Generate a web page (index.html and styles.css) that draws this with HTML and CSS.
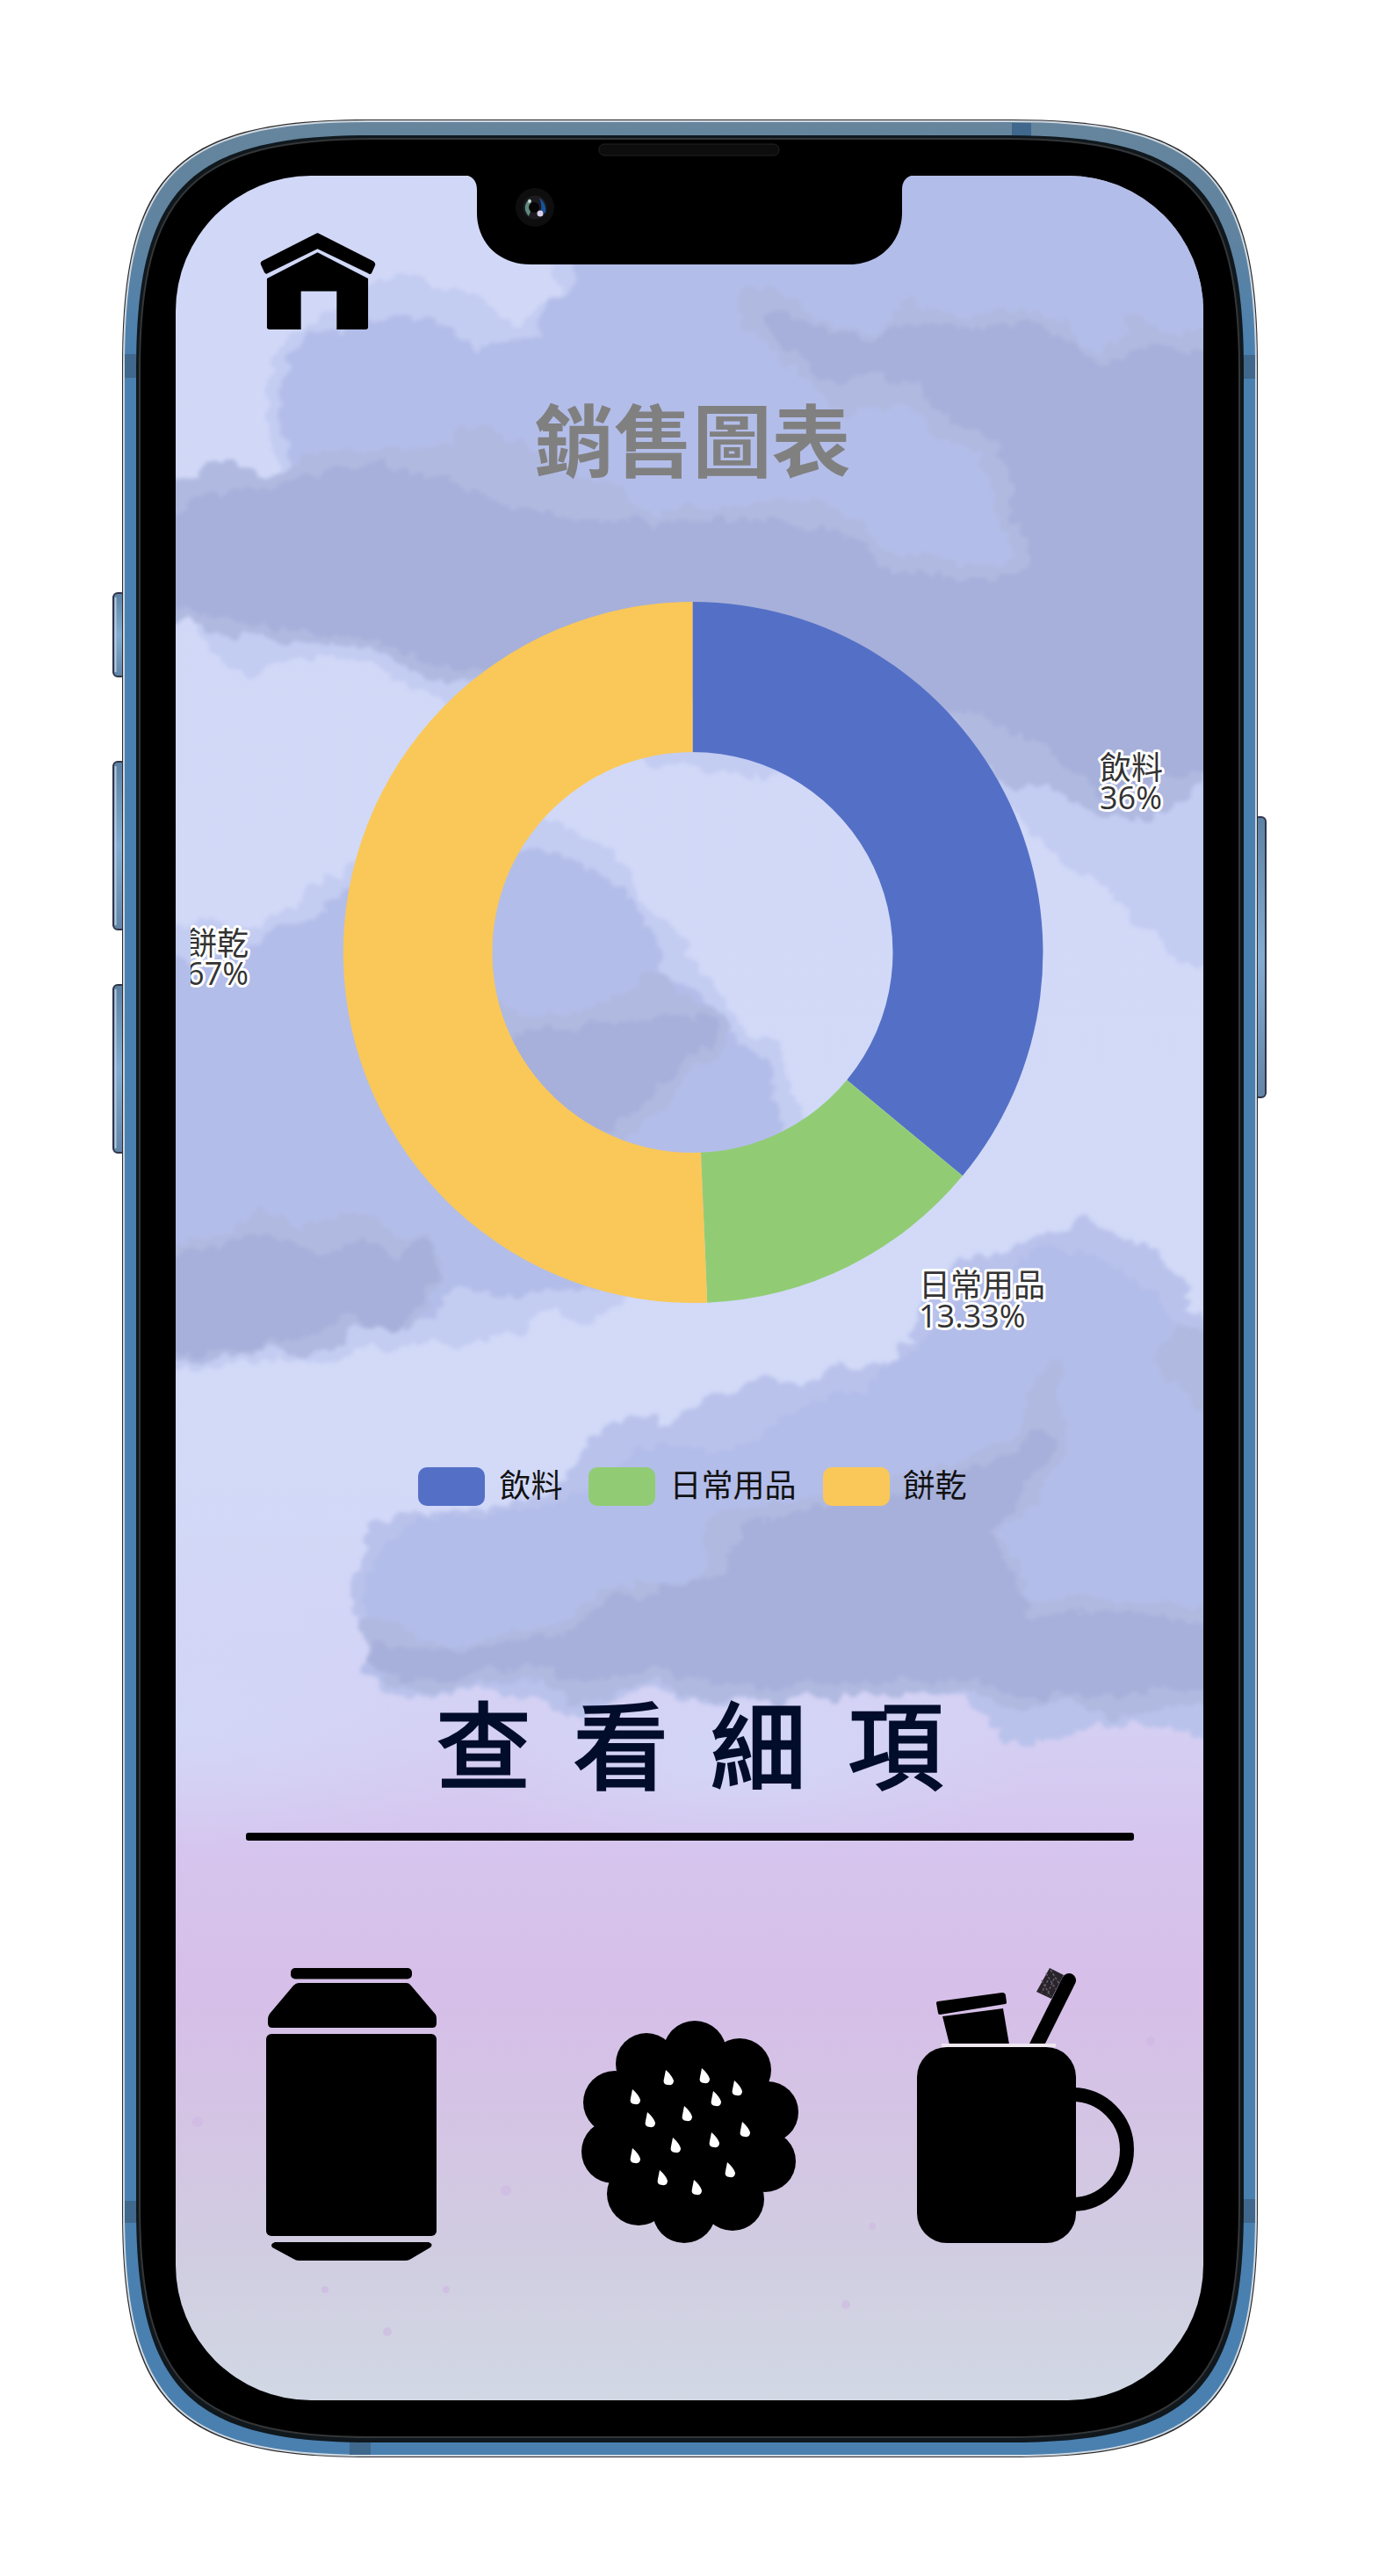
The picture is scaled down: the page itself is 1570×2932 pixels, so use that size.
FILE: index.html
```html
<!DOCTYPE html>
<html lang="zh-Hant">
<head>
<meta charset="utf-8">
<meta name="viewport" content="width=device-width, initial-scale=1">
<title>銷售圖表</title>
<link rel="stylesheet" href="styles.css">
</head>
<body>
<div class="stage">
<div class="phone">
  <svg class="frame" viewBox="139 136 1293 2661" preserveAspectRatio="none" aria-hidden="true">
    <defs>
      <linearGradient id="metal" x1="0" y1="0" x2="0" y2="1">
        <stop offset="0" stop-color="#66859d"/><stop offset=".05" stop-color="#5f83a0"/><stop offset=".1" stop-color="#4a80b0"/><stop offset="1" stop-color="#4a80b0"/>
      </linearGradient>
      <linearGradient id="key" x1="0" y1="0" x2="0" y2="1">
        <stop offset="0" stop-color="#5d81a2"/><stop offset=".5" stop-color="#84acd0"/><stop offset="1" stop-color="#6384a6"/>
      </linearGradient>
    </defs>
    <g fill="url(#key)" stroke="#303549" stroke-width="2">
      <rect x="129" y="675" width="14" height="95" rx="5"/>
      <rect x="129" y="867" width="14" height="191" rx="5"/>
      <rect x="129" y="1121" width="14" height="191" rx="5"/>
      <rect x="1428" y="930" width="13" height="319" rx="5"/>
    </g>
    <g fill="none" stroke="#b3cbe2" stroke-width="2">
      <path d="M131.500 680V765M131.500 872V1053M131.500 1126V1307"/>
    </g>
    <path d="M139 416C139 197 200 136 419 136H1152C1371 136 1432 197 1432 416V2517C1432 2736 1371 2797 1152 2797H419C200 2797 139 2736 139 2517Z" fill="#2b2b2e"/>
    <path d="M141 416C141 199 202 138 419 138H1152C1369 138 1430 199 1430 416V2517C1430 2734 1369 2795 1152 2795H419C202 2795 141 2734 141 2517Z" fill="url(#metal)" stroke="#cfd8e0" stroke-width="2"/>
    <path d="M142 403h13v27h-13zM1416 404h13v27h-13zM142 2505h13v25h-13zM1416 2503h13v27h-13zM1152 140h22v15h-22zM398 2779h24v15h-24z" fill="#3f688c"/>
    <path d="M155 420C155 213 216 154 423 154H1148C1355 154 1416 213 1416 420V2513C1416 2720 1355 2780 1148 2780H423C216 2780 155 2720 155 2513Z" fill="#10181d"/>
    <path d="M159 422C159 218 220 158 425 158H1146C1351 158 1411 218 1411 422V2510C1411 2714 1351 2774 1146 2774H425C220 2774 159 2714 159 2510Z" fill="#000" stroke="#343638" stroke-width="2"/>
    <rect x="682" y="164" width="205" height="13" rx="6" fill="#0d0d0e" stroke="#222324"/>
  </svg>

  <main class="screen">
    <svg class="sky" viewBox="200 200 1170 2532" preserveAspectRatio="none" aria-hidden="true">
      <defs>
        <linearGradient id="dusk" x1="0" y1="0" x2="0" y2="1">
          <stop offset="0" stop-color="#d1d8f7"/><stop offset=".58" stop-color="#d2daf8"/><stop offset=".65" stop-color="#d3d5f6"/><stop offset=".7" stop-color="#d5cff3"/><stop offset=".75" stop-color="#d6c5ee"/><stop offset=".82" stop-color="#d6bfe8"/><stop offset=".88" stop-color="#d4c5e4"/><stop offset=".93" stop-color="#d1cce1"/><stop offset="1" stop-color="#d1d8e4"/>
        </linearGradient>
        <radialGradient id="haze"><stop offset="0" stop-color="#d2d9f8" stop-opacity=".8"/><stop offset="1" stop-color="#d2d9f8" stop-opacity="0"/></radialGradient>
        <filter id="soft" x="-5%" y="-5%" width="110%" height="110%" color-interpolation-filters="sRGB">
          <feTurbulence type="fractalNoise" baseFrequency=".03" numOctaves="3" seed="4" result="noise"/>
          <feDisplacementMap in="SourceGraphic" in2="noise" scale="26" xChannelSelector="R" yChannelSelector="G"/>
          <feGaussianBlur stdDeviation="2"/>
        </filter>
      </defs>
      <rect x="200" y="200" width="1170" height="2532" fill="url(#dusk)"/>
      <ellipse cx="180" cy="1960" rx="420" ry="150" fill="url(#haze)"/>
      <ellipse cx="850" cy="2000" rx="330" ry="110" fill="url(#haze)"/>
      <g filter="url(#soft)" stroke-linejoin="round" stroke-linecap="round" stroke-width="30" stroke-dasharray="0 22">
        <g fill="#c3ccf1" stroke="#c3ccf1">
          <path d="M330 540L315 450 330 400 420 345 440 335 466 330 494 342 522 342 548 354 562 372 588 390 610 372 640 352 652 326 640 300 640 170H1410V600H330Z"/>
          <path d="M160 560L236 710 262 742 283 757 312 736 344 740 395 736 428 742 475 770 508 784 756 858 1150 898 1215 970 1271 1000 1294 1035 1323 1053 1337 1075 1410 1100V560Z"/>
          <path d="M160 1060L288 1068 325 1052 345 1045 360 1022 385 1005 500 960 625 945 655 965 684 971 697 990 725 1044 762 1060 768 1104 798 1118 826 1160 845 1194 879 1203 888 1248 908 1284 714 1470 663 1492 616 1478 583 1505 536 1519 480 1514 381 1530 348 1540 302 1530 255 1547 160 1540Z"/>
          <path d="M414 1804L428 1755 442 1738 466 1735 550 1730 640 1710 666 1680 686 1642 728 1628 775 1640 797 1606 831 1598 877 1578 905 1600 935 1580 980 1566 1033 1564 1045 1530 1090 1448 1140 1442 1190 1424 1238 1400 1262 1418 1306 1428 1316 1456 1344 1464 1346 1480 1335 1510 1410 1510V1976L1313 1946 1271 1952 1210 1958 1173 1976 1140 1958 1107 1916 976 1912 794 1927 747 1906 658 1936 550 1906 498 1918 455 1920 440 1904 417 1845Z" fill="#b9c2eb" stroke="#b9c2eb"/>
        </g>
        <g fill="#b3bde9" stroke="#b3bde9">
          <path d="M345 540L340 490 332 444 344 408 364 388 430 378 475 372 515 386 535 418 580 400 630 400 634 360 662 330 660 170H1410V700H345Z"/>
          <path d="M160 1100L240 1110 300 1084 324 1070 365 1054 400 1024 590 980 640 984 680 1004 710 1034 740 1088 738 1124 790 1144 830 1194 866 1220 876 1290 700 1450 590 1460 510 1450 480 1495 160 1500Z"/>
          <path d="M431 1800L446 1768 480 1740 540 1738 640 1724 700 1694 730 1664 780 1654 830 1664 880 1644 920 1614 980 1594 1050 1544 1120 1464 1200 1434 1250 1444 1306 1484 1336 1534 1410 1544V1900H431Z"/>
        </g>
        <g fill="#b0b9e0" stroke="#b0b9e0">
          <path d="M160 560L225 556 242 540 262 534 306 560 340 542 366 527 400 520 430 526 475 524 508 516 526 505 550 500 588 515 611 534 663 560 700 567 712 586 738 600 780 588 827 598 882 583 929 583 960 594 976 622 1008 646 1060 646 1097 652 1146 666 1174 624 1156 595 1139 557 1133 509 1088 488 1072 488 1070 474 1044 448 990 452 966 462 944 447 932 426 908 407 884 382 854 363 852 342 863 340 886 342 904 358 932 380 990 393 1022 380 1036 353 1044 348 1060 361 1088 380 1127 369 1163 365 1189 376 1204 380 1216 401 1252 419 1288 395 1294 370 1332 391 1410 397V700L1355 884 1320 917 1290 922 1243 905 1210 887 1154 880 1130 857 1088 803 508 762 465 748 428 722 330 718 300 706 260 714 236 700 160 690V560Z"/>
          <path d="M160 1444L236 1418 270 1418 284 1400 306 1390 336 1413 391 1401 422 1396 448 1421 480 1420 488 1434 482 1472 464 1498 405 1494 378 1514 348 1534 302 1521 255 1536 160 1530Z"/>
          <path d="M560 1154L625 1169 677 1164 715 1138 747 1124 768 1145 813 1162 820 1176 800 1195 765 1225 740 1255 705 1283 650 1310 560 1240Z"/>
          <path d="M422 1856L447 1866 466 1874 508 1890 550 1884 590 1868 645 1860 678 1832 723 1814 787 1818 817 1788 822 1733 882 1731 1035 1692 1120 1666 1172 1640 1188 1576 1203 1560 1190 1579 1204 1621 1195 1663 1164 1702 1119 1746 1149 1785 1160 1834 1233 1829 1300 1834 1410 1846V1926L1304 1929 1266 1944 1233 1929 1191 1920 1154 1934 1112 1909 1046 1914 860 1922 794 1919 747 1899 690 1919 650 1924 612 1892 550 1899 498 1914 455 1909 434 1886Z"/>
          <path d="M1410 1522L1344 1526 1326 1550 1341 1564 1410 1630Z"/>
        </g>
        <g fill="#a7b0da" stroke="#a7b0da">
          <path d="M170 620L235 571 300 576 350 556 430 541 500 556 560 586 620 596 700 606 880 606 956 618 1000 656 1140 678 1191 640 1171 588 1151 498 1084 464 1044 424 990 414 944 425 886 366 880 364 930 386 990 401 1050 381 1088 390 1170 376 1203 398 1250 431 1304 406 1410 416V854L1260 892 1190 832 1100 794 510 748 420 713 320 700 260 692 160 670Z"/>
          <path d="M160 1466L240 1428 320 1422 380 1446 410 1426 450 1446 480 1426 484 1445 474 1476 438 1499 390 1474 368 1504 310 1514 260 1529 160 1519Z"/>
          <path d="M560 1200L640 1182 720 1176 765 1166 810 1171 785 1190 730 1240 675 1290 570 1260Z"/>
          <path d="M432 1882L500 1896 590 1882 650 1877 692 1836 740 1824 820 1806 862 1746 1060 1706 1160 1666 1180 1636 1188 1650 1144 1698 1114 1750 1149 1802 1160 1856 1240 1846 1410 1860V1904L1270 1917 1160 1917 1080 1897 860 1907 740 1887 650 1902 620 1874 520 1896 450 1899Z"/>
        </g>
      </g>
      <g fill="#cfb7e4" opacity=".6">
        <circle cx="225" cy="2415" r="6"/><circle cx="576" cy="2493" r="6"/><circle cx="441" cy="2654" r="5"/><circle cx="508" cy="2606" r="4"/><circle cx="370" cy="2606" r="4"/><circle cx="963" cy="2623" r="5"/><circle cx="1310" cy="2323" r="5"/><circle cx="993" cy="2534" r="4"/>
      </g>
    </svg>

    <div class="notch" aria-hidden="true">
      <svg viewBox="528 200 514 102">
        <path d="M528 199C538 200 543 206 543 216V242C543 278 570 301 604 301H967C1002 301 1027 275 1027 242V216C1027 206 1032 200 1042 199Z"/>
        <circle cx="609" cy="236" r="22" fill="#0e0e0f"/>
        <circle cx="609" cy="236" r="13.500" fill="#1d1b20"/>
        <path d="M603 226Q593 236 602 246Q607 236 603 226Z" fill="#5f8b7c"/>
        <path d="M614 225Q623 232 621 243L616 240Q617 232 614 225Z" fill="#17539b"/>
        <circle cx="608" cy="236" r="6" fill="#050507"/>
        <circle cx="615" cy="243" r="3.500" fill="#d6d2ea"/><circle cx="603" cy="229" r="2" fill="#c7d8d4"/>
      </svg>
    </div>

    <header class="top">
      <a class="home" href="#" aria-label="首頁">
        <svg viewBox="295 264 133 112" aria-hidden="true">
          <path d="M359 265.500Q361 264 363 265.500L425 297Q428 299 427 302L423 311Q421 313 419 311L361 283 304 311Q302 313 300 310L296 301Q295 299 297 297Z"/>
          <path d="M361 287L419 317V373Q419 375.500 416 375.500H383V331.500H342V375.500H306Q303 375.500 303 373V317Z"/>
        </svg>
      </a>
    </header>

    <h1 class="title">銷售圖表</h1>

    <figure class="chart">
      <svg class="donut" viewBox="217 600 1143 940" role="img" aria-label="銷售圖表">
        <path fill="#5470c6" d="M788.500 685A399 399 0 0 1 1095.900 1338.300L964.200 1229.300A228 228 0 0 0 788.500 856Z"/>
        <path fill="#91cc75" d="M1095.900 1338.300A399 399 0 0 1 805.200 1482.700L798 1311.800A228 228 0 0 0 964.200 1229.300Z"/>
        <path fill="#fac858" d="M805.200 1482.700A399 399 0 1 1 788.500 685V856A228 228 0 1 0 798 1311.800Z"/>
        <g class="label">
          <text x="1252" y="887">飲料</text><text x="1252" y="921">36%</text>
          <text x="1046" y="1476">日常用品</text><text x="1046" y="1511">13.33%</text>
          <text x="283" y="1087" text-anchor="end">餅乾</text><text x="283" y="1121" text-anchor="end">50.67%</text>
        </g>
      </svg>
      <figcaption>
        <ul class="legend">
          <li><span class="swatch drinks"></span><span class="name">飲料</span></li>
          <li><span class="swatch daily"></span><span class="name">日常用品</span></li>
          <li><span class="swatch cookies"></span><span class="name">餅乾</span></li>
        </ul>
      </figcaption>
    </figure>

    <h2 class="details">查  看  細  項</h2>
    <hr class="rule">

    <nav class="categories" aria-label="查看細項">
      <a href="#" aria-label="飲料">
        <svg viewBox="279 2240 248 334" aria-hidden="true">
          <rect x="331" y="2240" width="138" height="12.500" rx="5"/>
          <path d="M340 2257H463Q466 2257 468 2260L496 2293Q497 2295 497 2298V2303Q497 2308 492 2308H310Q305 2308 305 2303V2298Q305 2295 307 2292L334 2260Q337 2257 340 2257Z"/>
          <rect x="303" y="2315" width="194" height="230" rx="6"/>
          <path d="M313 2552H488Q494 2554 490 2558L468 2571Q465 2573 462 2573H340Q337 2573 334 2571L310 2558Q307 2554 313 2552Z"/>
        </svg>
      </a>
      <a href="#" aria-label="餅乾">
        <svg viewBox="662 2240 248 334" aria-hidden="true">
          <circle cx="786" cy="2427" r="97"/>
          <circle cx="791" cy="2336" r="36"/><circle cx="736" cy="2349" r="35"/><circle cx="700" cy="2393" r="36"/><circle cx="698" cy="2449" r="36"/><circle cx="727" cy="2497" r="36"/><circle cx="779" cy="2517" r="36"/><circle cx="834" cy="2503" r="36"/><circle cx="871" cy="2460" r="35"/><circle cx="874" cy="2404" r="35"/><circle cx="842" cy="2356" r="36"/>
          <g fill="#fff">
            <path id="seed" d="M720 2378Q727 2384 729 2390Q729 2396 723 2395Q716 2395 718 2388Z"/>
            <use href="#seed" x="38" y="-22"/><use href="#seed" x="79" y="-24"/><use href="#seed" x="92" y="2"/><use href="#seed" x="17" y="26"/><use href="#seed" x="59" y="19"/><use href="#seed" x="46" y="55"/><use href="#seed" x="90" y="49"/><use href="#seed" y="67"/><use href="#seed" x="31" y="92"/><use href="#seed" x="70" y="103"/><use href="#seed" x="108" y="83"/><use href="#seed" x="116" y="-10"/><use href="#seed" x="125" y="37"/>
          </g>
        </svg>
      </a>
      <a href="#" aria-label="日常用品">
        <svg viewBox="1045 2240 248 334" aria-hidden="true">
          <path d="M1069 2280L1142 2270Q1144 2270 1144 2272L1145 2279 1071 2291Z" stroke="#000" stroke-width="4" stroke-linejoin="round"/>
          <path d="M1074 2295L1143 2286 1150 2327H1082Z"/>
          <path d="M1196 2240L1212 2248 1198 2275 1181 2267Z" fill="#29242b"/>
          <path d="M1192 2246L1203 2264M1187 2254L1197 2272M1197 2242L1207 2258M1194 2254L1187 2268M1201 2252L1193 2271" stroke="#665e6b" stroke-width="1.500" stroke-dasharray="3 2"/>
          <path d="M1178 2334L1218 2254" stroke="#000" stroke-width="16" stroke-linecap="round"/>
          <path d="M1073 2328H1203" stroke="#eee7f0" stroke-width="4"/>
          <rect x="1045" y="2330" width="181" height="223" rx="34"/>
          <path d="M1222 2384A62 62.500 0 0 1 1222 2509" fill="none" stroke="#000" stroke-width="16"/>
        </svg>
      </a>
    </nav>
  </main>
</div>
</div>
</body>
</html>
```
FILE: styles.css
```css
* { box-sizing: border-box; }

body {
  margin: 0;
  background: #fff;
  font-family: "Open Sans", "Noto Sans CJK TC", sans-serif;
}

svg { display: block; }

.stage { padding: 136px 138px 135px 139px; }

/* Device shell */
.phone {
  position: relative;
  padding: 64px 62px 65px 61px;
}

.frame {
  position: absolute;
  inset: 0;
  width: 100%;
  height: 100%;
  overflow: visible;
}

.screen {
  position: relative;
  display: flex;
  flex-direction: column;
  padding: 64px 0 158px;
  overflow: hidden;
  border-radius: 154px;
}

.sky {
  position: absolute;
  inset: 0;
  width: 100%;
  height: 100%;
}

.notch {
  position: absolute;
  top: 0;
  left: 0;
  right: 0;
  display: flex;
  justify-content: center;
}

.notch svg { width: 514px; max-width: 44%; }

.top {
  position: relative;
  display: flex;
  padding: 0 96px;
}

.home { color: #000; }
.home svg { width: 132px; height: 112px; }

.title {
  position: relative;
  margin: 76px 10px 0 17px;
  color: #808080;
  font: bold 90px/90px "Noto Sans CJK TC", sans-serif;
  text-align: center;
}

.chart {
  position: relative;
  margin: 58px 10px 0 17px;
}

.donut { width: 100%; height: auto; }

.label {
  font-size: 36px;
  fill: #333;
  stroke: #fff;
  stroke-width: 6px;
  stroke-linejoin: round;
  paint-order: stroke;
}

.legend {
  display: flex;
  justify-content: center;
  gap: 30px;
  margin: 130px 0 0;
  padding: 0;
  list-style: none;
  color: #111;
  font: 36px/36px "Noto Sans CJK TC", sans-serif;
}

.legend li {
  display: flex;
  align-items: flex-start;
  gap: 16px;
}

.swatch {
  width: 76px;
  height: 44px;
  border-radius: 10px;
}

.drinks { background: #5470c6; }
.daily { background: #91cc75; }
.cookies { background: #fac858; }

.details {
  position: relative;
  margin: 213px 0 0;
  color: #020d2b;
  font: 400 108px/108px "Noto Sans CJK TC", sans-serif;
  text-align: center;
  white-space: pre;
  -webkit-text-stroke: 3px #020d2b;
}

.rule {
  position: relative;
  height: 9px;
  margin: 51px 79px 0 80px;
  border: 0;
  border-radius: 3px;
  background: #000;
}

.categories {
  position: relative;
  display: flex;
  justify-content: space-between;
  margin-top: 145px;
  padding: 0 78px 0 79px;
}

.categories a { flex: 0 1 248px; color: #000; }
.categories svg { width: 100%; height: auto; }
```
